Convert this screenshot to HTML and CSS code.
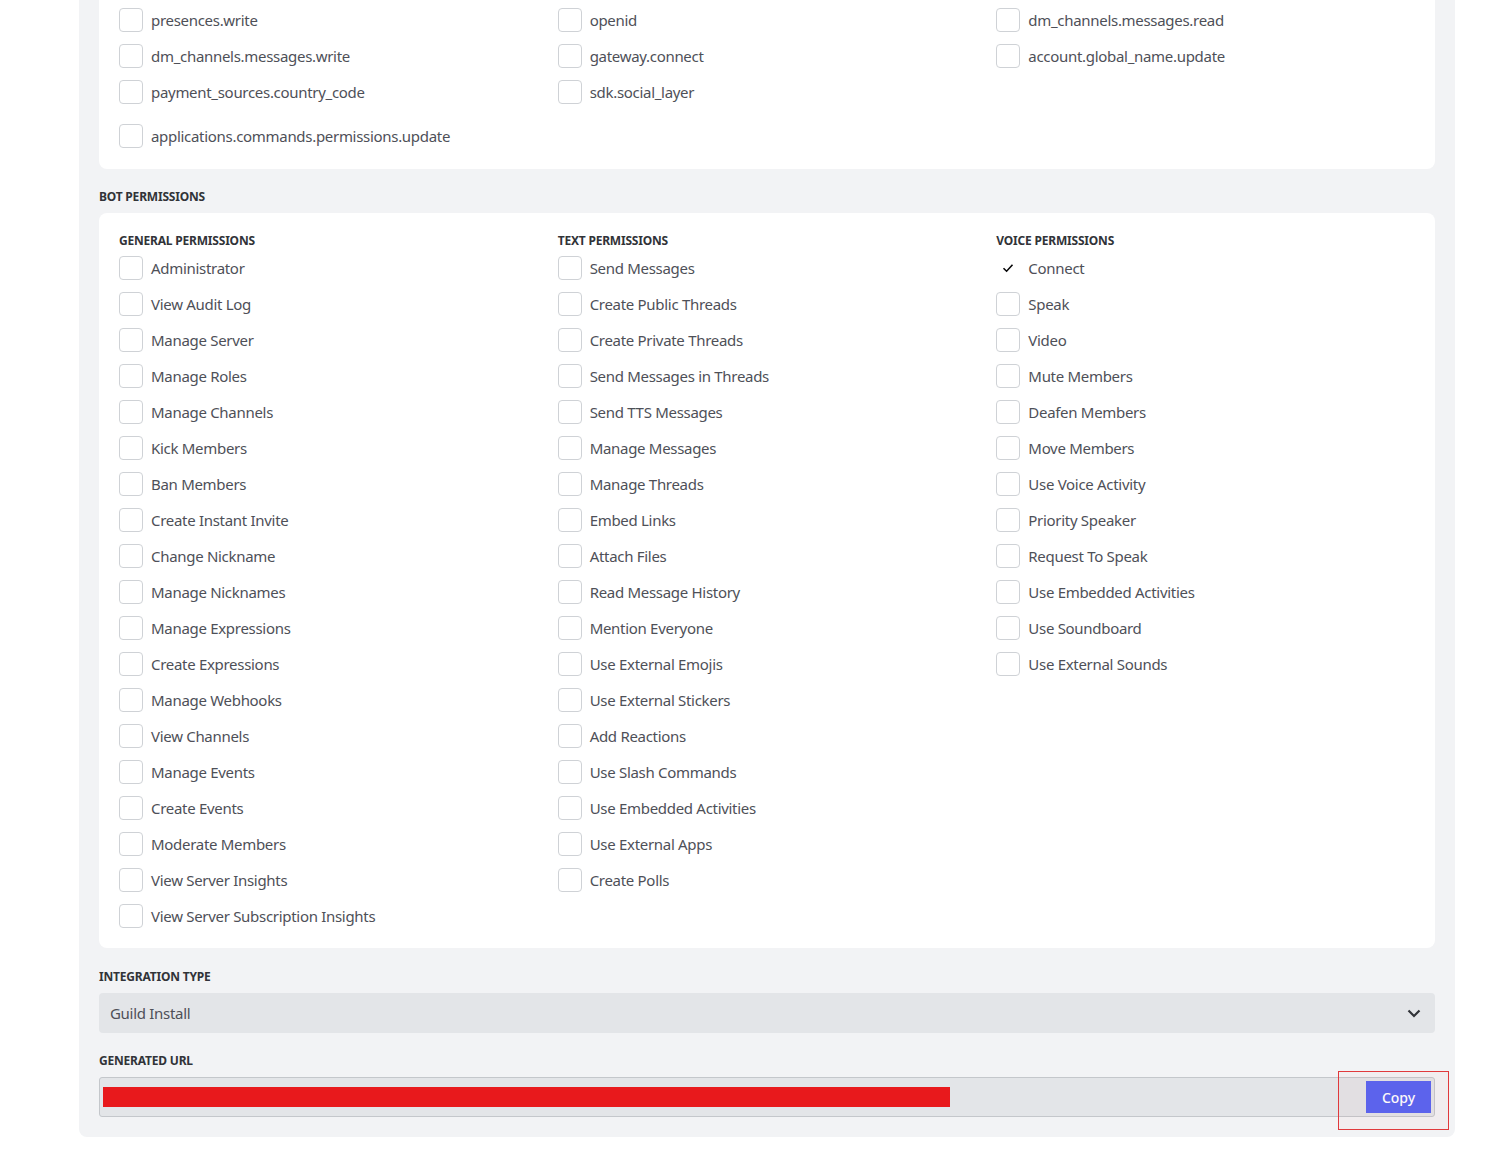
FILE: index.html
```html
<!DOCTYPE html>
<html lang="en">
<head>
	<meta charset="UTF-8">
	<title>OAuth2 URL Generator</title>
	<link rel="stylesheet" href="styles.css">
</head>
<body>
	<div class="panel">
		<div class="card card-scopes">
			<div class="cols">
				<div class="col">
					<label class="item"><span class="box"></span>presences.write</label>
					<label class="item"><span class="box"></span>dm_channels.messages.write</label>
					<label class="item"><span class="box"></span>payment_sources.country_code</label>
					<label class="item item-last"><span class="box"></span>applications.commands.permissions.update</label>
				</div>
				<div class="col">
					<label class="item"><span class="box"></span>openid</label>
					<label class="item"><span class="box"></span>gateway.connect</label>
					<label class="item"><span class="box"></span>sdk.social_layer</label>
				</div>
				<div class="col">
					<label class="item"><span class="box"></span>dm_channels.messages.read</label>
					<label class="item"><span class="box"></span>account.global_name.update</label>
				</div>
			</div>
		</div>

		<h3 class="title">Bot Permissions</h3>
		<div class="card">
			<div class="cols">
				<div class="col">
					<h4 class="subtitle">General Permissions</h4>
					<label class="item"><span class="box"></span>Administrator</label>
					<label class="item"><span class="box"></span>View Audit Log</label>
					<label class="item"><span class="box"></span>Manage Server</label>
					<label class="item"><span class="box"></span>Manage Roles</label>
					<label class="item"><span class="box"></span>Manage Channels</label>
					<label class="item"><span class="box"></span>Kick Members</label>
					<label class="item"><span class="box"></span>Ban Members</label>
					<label class="item"><span class="box"></span>Create Instant Invite</label>
					<label class="item"><span class="box"></span>Change Nickname</label>
					<label class="item"><span class="box"></span>Manage Nicknames</label>
					<label class="item"><span class="box"></span>Manage Expressions</label>
					<label class="item"><span class="box"></span>Create Expressions</label>
					<label class="item"><span class="box"></span>Manage Webhooks</label>
					<label class="item"><span class="box"></span>View Channels</label>
					<label class="item"><span class="box"></span>Manage Events</label>
					<label class="item"><span class="box"></span>Create Events</label>
					<label class="item"><span class="box"></span>Moderate Members</label>
					<label class="item"><span class="box"></span>View Server Insights</label>
					<label class="item"><span class="box"></span>View Server Subscription Insights</label>
				</div>
				<div class="col">
					<h4 class="subtitle">Text Permissions</h4>
					<label class="item"><span class="box"></span>Send Messages</label>
					<label class="item"><span class="box"></span>Create Public Threads</label>
					<label class="item"><span class="box"></span>Create Private Threads</label>
					<label class="item"><span class="box"></span>Send Messages in Threads</label>
					<label class="item"><span class="box"></span>Send TTS Messages</label>
					<label class="item"><span class="box"></span>Manage Messages</label>
					<label class="item"><span class="box"></span>Manage Threads</label>
					<label class="item"><span class="box"></span>Embed Links</label>
					<label class="item"><span class="box"></span>Attach Files</label>
					<label class="item"><span class="box"></span>Read Message History</label>
					<label class="item"><span class="box"></span>Mention Everyone</label>
					<label class="item"><span class="box"></span>Use External Emojis</label>
					<label class="item"><span class="box"></span>Use External Stickers</label>
					<label class="item"><span class="box"></span>Add Reactions</label>
					<label class="item"><span class="box"></span>Use Slash Commands</label>
					<label class="item"><span class="box"></span>Use Embedded Activities</label>
					<label class="item"><span class="box"></span>Use External Apps</label>
					<label class="item"><span class="box"></span>Create Polls</label>
				</div>
				<div class="col">
					<h4 class="subtitle">Voice Permissions</h4>
					<label class="item"><span class="box checked"><svg width="12" height="10" viewBox="0 0 12 10"><path d="M1.5 5.2 L4.6 8.2 L10.5 1.8" fill="none" stroke="#060607" stroke-width="1.6"/></svg></span>Connect</label>
					<label class="item"><span class="box"></span>Speak</label>
					<label class="item"><span class="box"></span>Video</label>
					<label class="item"><span class="box"></span>Mute Members</label>
					<label class="item"><span class="box"></span>Deafen Members</label>
					<label class="item"><span class="box"></span>Move Members</label>
					<label class="item"><span class="box"></span>Use Voice Activity</label>
					<label class="item"><span class="box"></span>Priority Speaker</label>
					<label class="item"><span class="box"></span>Request To Speak</label>
					<label class="item"><span class="box"></span>Use Embedded Activities</label>
					<label class="item"><span class="box"></span>Use Soundboard</label>
					<label class="item"><span class="box"></span>Use External Sounds</label>
				</div>
			</div>
		</div>

		<h3 class="title title-gap">Integration Type</h3>
		<div class="select">
			<span>Guild Install</span>
			<svg width="14" height="9" viewBox="0 0 14 9"><path d="M1.5 1.5 L7 7 L12.5 1.5" fill="none" stroke="#313338" stroke-width="2.2"/></svg>
		</div>

		<h3 class="title">Generated URL</h3>
		<div class="url">
			<div class="url-text"></div>
			<button class="copy">Copy</button>
			<div class="mark"></div>
		</div>
	</div>
</body>
</html>
```

FILE: styles.css
```css
* {
	padding: 0;
	margin: 0;
	box-sizing: border-box;
}
body {
	background: #fff;
	font-family: "Noto Sans", "Liberation Sans", sans-serif;
	color: #4e5058;
}
.panel {
	width: 1376px;
	margin-left: 79px;
	padding: 0 20px 20px;
	background: #f2f3f5;
	border-radius: 0 0 8px 8px;
}
.card {
	background: #fff;
	border-radius: 8px;
	padding: 20px 0 20px 20px;
}
.card-scopes {
	padding: 8px 0 21px 20px;
	border-radius: 0 0 8px 8px;
}
.cols {
	display: grid;
	grid-template-columns: repeat(3, 1fr);
}
.col {
	display: flex;
	flex-direction: column;
	gap: 12px;
}
.item {
	display: flex;
	align-items: center;
	gap: 8px;
	font-size: 15px;
	letter-spacing: -0.3px;
	line-height: 24px;
	height: 24px;
	white-space: nowrap;
}
.item-last {
	margin-top: 8px;
}
.box {
	width: 24px;
	height: 24px;
	flex: none;
	border: 1px solid #cfd2d6;
	border-radius: 4px;
	display: flex;
	align-items: center;
	justify-content: center;
}
.box.checked {
	border-color: transparent;
}
.title, .subtitle {
	font-size: 12px;
	line-height: 16px;
	font-weight: 700;
	text-transform: uppercase;
	color: #313338;
	letter-spacing: -0.2px;
}
.title {
	margin: 20px 0 8px;
}
.title-gap {
	margin-top: 21px;
}
.subtitle {
	margin-bottom: -5px;
}
.select {
	height: 40px;
	background: #e3e5e8;
	border-radius: 4px;
	display: flex;
	align-items: center;
	justify-content: space-between;
	padding: 0 14px 0 11px;
	font-size: 15px;
	letter-spacing: -0.3px;
	color: #4e5058;
}
.url {
	position: relative;
	height: 40px;
	background: #e3e5e8;
	border: 1px solid #c4c7cb;
	border-radius: 3px;
	display: flex;
	align-items: center;
	justify-content: space-between;
	padding: 0 3px;
}
.url-text {
	width: 847px;
	height: 20px;
	background: #e8191c;
}
.copy {
	width: 65px;
	height: 32px;
	border: none;
	background: #5865f2;
	color: #fff;
	font-family: "Noto Sans", "Liberation Sans", sans-serif;
	font-size: 14px;
	font-weight: 500;
}
.mark {
	position: absolute;
	left: 1238px;
	top: -7px;
	width: 111px;
	height: 59px;
	border: 1px solid #e0393c;
	background: rgba(230, 60, 60, 0.03);
}
```
